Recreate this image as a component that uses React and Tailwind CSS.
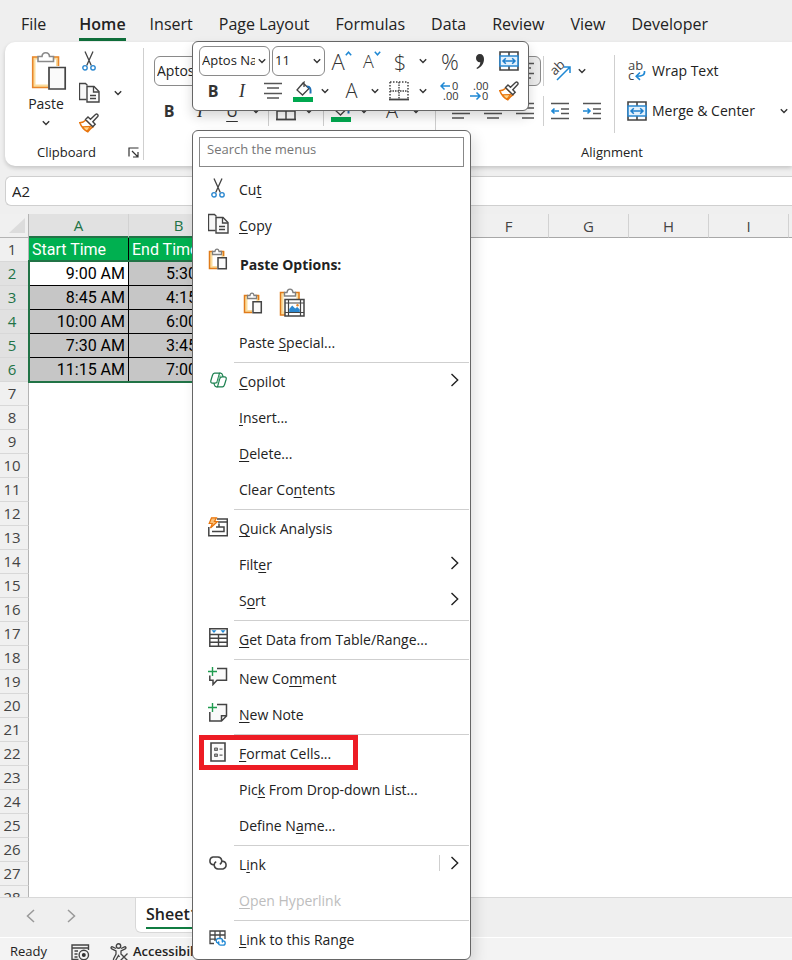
const tabs = ["File", "Home", "Insert", "Page Layout", "Formulas", "Data", "Review", "View", "Developer"];

const columns = ["A", "B", "C", "D", "E", "F", "G", "H", "I", "J"];

const times = [
    ["9:00 AM", "5:30 PM"],
    ["8:45 AM", "4:15 PM"],
    ["10:00 AM", "6:00 PM"],
    ["7:30 AM", "3:45 PM"],
    ["11:15 AM", "7:00 PM"],
];

const emptyRows = Array.from({ length: 22 }, (_, i) => i + 7);

/* ---------- icons ---------- */

function Icon({ w, h, children, className = "" }) {
    return (
        <svg width={w} height={h} viewBox={`0 0 ${w} ${h}`} fill="none" stroke="#444" className={`shrink-0 ${className}`} aria-hidden="true">
            {children}
        </svg>
    );
}

const Chevron = () => (
    <Icon w={8} h={6}>
        <path d="M.8 1.2 4 4.4 7.2 1.2" stroke="#333" strokeWidth="1.4" />
    </Icon>
);

const SubmenuArrow = () => (
    <Icon w={9} h={14}>
        <path d="M1.5 1 7.7 7l-6.2 6" stroke="#222" strokeWidth="1.4" />
    </Icon>
);

const ScissorsIcon = () => (
    <Icon w={14} h={20}>
        <path d="M3 .5 9.3 14.6M11 .5 4.7 14.6" strokeWidth="1.3" />
        <circle cx="3" cy="16.8" r="2.2" stroke="#2b88d0" strokeWidth="1.4" />
        <circle cx="11" cy="16.8" r="2.2" stroke="#2b88d0" strokeWidth="1.4" />
    </Icon>
);

const CopyIcon = () => (
    <Icon w={21} h={21}>
        <path d="M7.5 17.5h-7V1.5h6l2 2" fill="#f7f7f7" strokeWidth="1.3" />
        <path d="M8 4.5h7l5 5v10.5H8z" fill="#fafafa" strokeWidth="1.4" />
        <path d="M14.5 4.5v5.5H20M11 13.5h6M11 16.5h6" strokeWidth="1.3" />
    </Icon>
);

const PainterIcon = () => (
    <Icon w={20} h={20}>
        <path d="M7 7C5 9 3 9.600 .8 9.800c1.500 4 4 7 8 9 1.500-2 3-4 5.200-5z" fill="#fff" stroke="#e8750d" strokeWidth="1.500" />
        <path d="M3.500 13.800l8-.3-3.500 4.800c-2-1.200-3.500-2.700-4.500-4.500z" fill="#ffd58a" stroke="#e8750d" strokeWidth="1.200" />
        <path d="M6.500 6.500 9 4l2.500 2.300L16.500 1.500c1.500-1.200 3.300.5 2.200 2L13.800 8.700l2.400 2.500-2.400 2.500z" fill="#fff" strokeWidth="1.400" />
    </Icon>
);

const PasteLargeIcon = () => (
    <Icon w={36} h={40} className="ml-[5px]">
        <path d="M8 7H3v28h14M22 7h4.500v8" stroke="#fbdc9c" strokeWidth="3" />
        <path d="M9 6H1.700v30.500H17M21 6h6.500v9" stroke="#e8862b" strokeWidth="1.600" />
        <path d="M7 10.500V5.500h4c.3-5 7.200-5 7.500 0h4v5z" fill="#fff" stroke="#8a8a8a" strokeWidth="1.600" />
        <path d="M18 16.500h16.200v21.500H18z" fill="#fafafa" strokeWidth="1.700" />
    </Icon>
);

const PasteSmallIcon = () => (
    <Icon w={20} h={22}>
        <path d="M4 4.500H3v15h6M13 4.500h2v5" stroke="#fbdc9c" strokeWidth="3" />
        <path d="M5 3.500H1.500v17H9M12 3.500h3.500V8" stroke="#e07b1a" strokeWidth="1.500" />
        <path d="M4.500 6.500v-3H7c.3-3.300 3.700-3.300 4 0h2.500v3z" fill="#fff" stroke="#808080" strokeWidth="1.300" />
        <path d="M10 9.700h8.300v11H10z" fill="#fafafa" strokeWidth="1.500" />
    </Icon>
);

const PastePictureIcon = () => (
    <Icon w={26} h={30}>
        <path d="M5 6H3v19h3M17 6h2v6" stroke="#fbdc9c" strokeWidth="3" />
        <path d="M6 4.500H1.500v22.500H6M16 4.500h4V11" stroke="#e07b1a" strokeWidth="1.500" />
        <path d="M5.500 8V4.500H8c.4-4.500 5.600-4.500 6 0h2.500V8z" fill="#fff" stroke="#808080" strokeWidth="1.400" />
        <path d="M6 11.500h19v16.500H6z" fill="#fff" strokeWidth="1.500" />
        <path d="M9.500 11.500V28M21.500 11.500V28M6 15h19M6 24.500h19" strokeWidth="1.200" />
        <path d="M10.200 24v-3l3-3.500 3 3 2-1.500 2.600 2.500V24z" fill="#2b88d0" stroke="none" />
        <circle cx="18.500" cy="17.300" r="1.200" fill="#e8862b" stroke="none" />
    </Icon>
);

const MergeIcon = () => (
    <Icon w={20} h={20}>
        <path d="M1 1h18v18H1zM10 1v18" strokeWidth="1.600" />
        <path d="M1 5h18v10H1z" fill="#e3f1fc" stroke="#2b88d0" strokeWidth="1.600" />
        <path d="M4 10h12M6.800 7.200 4 10l2.800 2.800M13.200 7.200 16 10l-2.800 2.800" stroke="#1f7fcc" strokeWidth="1.500" />
    </Icon>
);

const AlignIcon = ({ short = "M3 6h12M3 16h12" }) => (
    <Icon w={18} h={18}>
        <path d={`M0 1.500h18M0 11.500h18${short}`} stroke="#555" strokeWidth="1.400" />
    </Icon>
);

const FillIcon = () => (
    <Icon w={20} h={21}>
        <path d="M10 2 4 9l5.500 5 6.500-6.500zM7.500 5 11 1.200V6" fill="#fff" strokeWidth="1.300" />
        <path d="M14 5.500c3 0 4 2 3.500 7" stroke="#1f6fb5" strokeWidth="2" />
        <path d="M0 16h20v5H0z" fill="#00a84f" stroke="none" />
    </Icon>
);

const BorderIcon = ({ dashed }) => (
    <Icon w={20} h={20}>
        <path d="M1 1h18v17M1 1v17" strokeWidth="1.500" strokeDasharray={dashed ? "1.500 1.500" : undefined} />
        <path d="M10 1v18M1 10h18" strokeWidth="1.400" strokeDasharray={dashed ? "1.500 1" : undefined} />
        <path d="M0 18.500h20" strokeWidth="1.800" />
    </Icon>
);

const IndentIcon = ({ right }) => (
    <Icon w={18} h={18}>
        <path d="M0 1.500h18M10 7h8M10 11.500h8M0 16.500h18" stroke="#555" strokeWidth="1.400" />
        <path d={right ? "M0 9h7M4.500 6.500 7 9l-2.500 2.500" : "M1 9h7M3.500 6.500 1 9l2.500 2.500"} stroke="#1f88d4" strokeWidth="1.600" />
    </Icon>
);

const OrientationIcon = () => (
    <Icon w={22} h={20}>
        <text x="0" y="0" transform="translate(6 15) rotate(-45)" fontSize="13" fontFamily="Open Sans" fill="#444" stroke="none">ab</text>
        <path d="M8 19 20.500 6.500M15 6H21V12" stroke="#1f88d4" strokeWidth="1.500" />
    </Icon>
);

const WrapIcon = () => (
    <Icon w={20} h={20}>
        <text x="1" y="9" fontSize="13" fontFamily="Open Sans" fill="#444" stroke="none">ab</text>
        <text x="1" y="19" fontSize="13" fontFamily="Open Sans" fill="#444" stroke="none">c</text>
        <path d="M17.500 10c.5 4-2 5.200-8 5.200M13 11.500l-3.800 3.700 3.800 3.700" stroke="#1f88d4" strokeWidth="1.600" />
    </Icon>
);

const LauncherIcon = () => (
    <Icon w={11} h={11}>
        <path d="M1 9.500V1h9.500M4 4l5.500 5.500M10 5v5H5" stroke="#333" strokeWidth="1.200" />
    </Icon>
);

const DecimalIcon = ({ increase }) => (
    <Icon w={20} h={20}>
        <text x={increase ? 12 : 3} y="9" fontSize="11" fontFamily="Open Sans" fill="#333" stroke="none">{increase ? "0" : ".00"}</text>
        <text x={increase ? 3 : 12} y="19" fontSize="11" fontFamily="Open Sans" fill="#333" stroke="none">{increase ? ".00" : "0"}</text>
        {increase
            ? <path d="M1 5h9M4.500 1.500 1 5l3.500 3.500" stroke="#1f88d4" strokeWidth="1.500" />
            : <path d="M0 15h10M6.500 11.500 10 15l-3.500 3.500" stroke="#1f88d4" strokeWidth="1.500" />}
    </Icon>
);

const FontSizeIcon = ({ grow }) => (
    <span className={`flex leading-5 font-light ${grow ? "text-[22px]" : "text-lg"}`}>
        A
        <Icon w={7} h={5}>
            <path d={grow ? "M.8 4.200 3.500 1.200l2.700 3" : "M.8 .8l2.700 3 2.700-3"} stroke="#1f88d4" strokeWidth="1.500" />
        </Icon>
    </span>
);

const CopilotIcon = () => (
    <Icon w={17} h={16}>
        <path d="M4.500 1.200h5L7.300 9.200c-.5 1.600-1 2-2.300 2H2.500C1 11.200.5 10 .9 8.500l1.500-5C2.900 1.800 3.300 1.200 4.500 1.200z" stroke="#1a7f4e" strokeWidth="1.200" />
        <path d="M12.500 14.800h-5l2.200-8c.5-1.600 1-2 2.300-2h2.500c1.500 0 2 1.200 1.600 2.700l-1.500 5c-.5 1.700-.9 2.300-2.100 2.300z" stroke="#1a7f4e" strokeWidth="1.200" />
        <path d="M9.500 1.200h1.200c1.300 0 1.600.8 2 2.200l.4 1.400M7.500 14.800H6.300c-1.300 0-1.600-.8-2-2.200l-.4-1.400" stroke="#1a7f4e" strokeWidth="1.200" />
        <path d="M9 3.500h2.500l.4 1.300c-1.500 0-2 .7-2.600 2L8 11.200H5.300c1.300 0 1.800-.8 2.200-2.300z" fill="#7cc09b" stroke="none" />
    </Icon>
);

const QuickAnalysisIcon = () => (
    <Icon w={20} h={20}>
        <path d="M9 2h10.300v16.700H.800V10M10 5h9" strokeWidth="1.500" />
        <path d="M4 14.500h12V10H8M11 10V6.500" strokeWidth="1.500" />
        <path d="M3.500 .8h5L6.500 4.500h3L2.500 11l1.800-4.500H1.200z" fill="#fbc078" stroke="#e8750d" strokeWidth="1.200" />
    </Icon>
);

const TableIcon = () => (
    <Icon w={19} h={19}>
        <path d="M.800 .800h17.400v17.400H.800z" fill="#fff" strokeWidth="1.500" />
        <path d="M1 6.500h17M1 10.200h17M1 14.200h17M9.500 6.500V18" strokeWidth="1.400" />
        <path d="M2.500 2.200h5L5 5zM11.500 2.200h5L14 5z" fill="#1f88d4" stroke="none" />
    </Icon>
);

const CommentIcon = () => (
    <Icon w={20} h={19}>
        <path d="M9 1.500h9.500v11.700H9L5 17.500v-4.300H1.800V8.500" fill="#fafafa" strokeWidth="1.500" />
        <path d="M4.500 0v9M0 4.500h9" stroke="#1f9c4f" strokeWidth="1.400" />
    </Icon>
);

const NoteIcon = () => (
    <Icon w={20} h={19}>
        <path d="M9 1.500h9.500v11.500l-5 5H1.800V9M18.500 12.800h-5V18" fill="#fafafa" strokeWidth="1.500" />
        <path d="M4.500 0v9M0 4.500h9" stroke="#1f9c4f" strokeWidth="1.400" />
    </Icon>
);

const FormatCellsIcon = () => (
    <Icon w={16} h={20}>
        <path d="M1 1h14v18H1z" fill="#fafafa" strokeWidth="1.600" />
        <path d="M4.500 6h3v2.500h-3zM4.500 12h3v2.500h-3z" fill="#999" stroke="#666" />
        <path d="M9.500 7.200h3M9.500 13.200h3" stroke="#666" strokeWidth="1.300" />
    </Icon>
);

const LinkIcon = () => (
    <Icon w={20} h={14}>
        <path d="M7 8.800H5A4 4 0 0 1 5 1h5a3.900 3.900 0 0 1 1.800 7.300" strokeWidth="1.500" />
        <path d="M13 5.200H15a4 4 0 0 1 0 7.800h-5a3.900 3.900 0 0 1-1.800-7.300" strokeWidth="1.500" />
    </Icon>
);

const LinkRangeIcon = () => (
    <Icon w={18} h={16}>
        <path d="M5 13.500H1V1h15v8M1 5h15M1 9.200h6M6 1v10M11 1v7" strokeWidth="1.300" />
        <path d="M10.500 13H9a2.300 2.300 0 0 1 0-4.500h2.500a2.300 2.300 0 0 1 1.500 4" stroke="#1f88d4" strokeWidth="1.300" />
        <path d="M12.500 10.800H14a2.200 2.200 0 0 1 0 4.400h-2.500a2.200 2.200 0 0 1-1.500-3.800" stroke="#1f88d4" strokeWidth="1.300" />
    </Icon>
);

const MacroIcon = () => (
    <Icon w={19} h={17}>
        <path d="M7.500 15.500H1V1h16.500v5M1 4h16.500M3.500 7H7M3.500 10h3M3.500 13h3" strokeWidth="1.400" />
        <circle cx="12.800" cy="11" r="4.700" strokeWidth="1.400" />
        <circle cx="12.800" cy="11" r="2" fill="#333" stroke="none" />
    </Icon>
);

const AccessibilityIcon = () => (
    <Icon w={20} h={19}>
        <circle cx="8.500" cy="3" r="2.200" strokeWidth="1.400" />
        <path d="M6 5.500 2.500 3.800C1 3.500.5 5.200 1.800 5.800L6 8v3l-2.500 5c-.3 1.600 1.500 2.300 2.300 1L8.500 12.500l1 1.500M11 5.500l3.500-1.700c1.500-.3 2 1.400.7 2L11 8v2.500" strokeWidth="1.300" />
        <path d="m10.500 10.500 7 7M17.500 10.500l-7 7" strokeWidth="1.400" />
    </Icon>
);

/* ---------- ribbon ---------- */

function Tool({ label, className = "", children }) {
    return (
        <button type="button" aria-label={label} className={`flex h-[30px] shrink-0 items-center justify-center text-[#333] ${className}`}>
            {children}
        </button>
    );
}

function FontSelect({ label, value, className }) {
    return (
        <span className={`relative flex h-[30px] items-center rounded-md border border-[#8a8a8a] bg-white ${className}`}>
            <select aria-label={label} className="h-full w-full appearance-none pr-[14px] pl-[2px] text-[#222]">
                <option>{value}</option>
            </select>
            <span className="pointer-events-none absolute right-[3px]">
                <Chevron />
            </span>
        </span>
    );
}

const Bold = () => <span className="text-base font-bold">B</span>;
const Italic = () => <span className="font-['Liberation_Serif',serif] text-lg italic">I</span>;

function Ribbon() {
    return (
        <section className="ml-[5px] flex shrink-0 rounded-l-[10px] bg-white py-[6px] text-sm shadow-[0_2px_4px_rgba(0,0,0,0.18)]">
            {/* Clipboard */}
            <div className="flex w-[139px] shrink-0 flex-col border-r border-[#cfcfcf]">
                <div className="flex h-[82px] pt-[3px]">
                    <button type="button" className="ml-[22px] flex h-[82px] w-[38px] flex-col items-center">
                        <PasteLargeIcon />
                        <span className="mt-[3px] leading-5">Paste</span>
                        <span className="mt-[6px]">
                            <Chevron />
                        </span>
                    </button>
                    <div className="ml-[8px] flex w-8 flex-col gap-px">
                        <Tool label="Cut" className="mt-[-5px]"><ScissorsIcon /></Tool>
                        <Tool label="Copy"><CopyIcon /></Tool>
                        <Tool label="Format Painter"><PainterIcon /></Tool>
                    </div>
                    <Tool label="Copy options" className="mt-[27px] ml-[3px] w-5"><Chevron /></Tool>
                </div>
                <div className="mt-[14px] flex items-center pl-8 text-[13px] leading-4">
                    Clipboard
                    <button type="button" aria-label="Clipboard settings" className="mr-1 ml-auto">
                        <LauncherIcon />
                    </button>
                </div>
            </div>

            {/* Font */}
            <div className="flex w-[292px] shrink-0 flex-col gap-[10px] border-r border-[#cfcfcf] pt-2 pl-[10px]">
                <FontSelect label="Font" value="Aptos Narrow" className="w-[140px] text-sm" />
                <div className="flex">
                    <Tool label="Bold" className="w-[30px]"><Bold /></Tool>
                    <Tool label="Italic" className="w-8"><Italic /></Tool>
                    <Tool label="Underline" className="w-8"><span className="text-base underline underline-offset-4">U</span></Tool>
                    <Tool label="Underline options" className="w-4"><Chevron /></Tool>
                    <span className="mx-1 h-[30px] w-px bg-[#cfcfcf]" />
                    <Tool label="Borders" className="w-[26px]"><BorderIcon /></Tool>
                    <Tool label="Border options" className="w-5"><Chevron /></Tool>
                    <span className="mx-1 h-[30px] w-px bg-[#cfcfcf]" />
                    <Tool label="Fill Color" className="w-[26px]"><FillIcon /></Tool>
                    <Tool label="Fill options" className="w-5"><Chevron /></Tool>
                    <Tool label="Font Color" className="w-9"><span className="text-xl font-light">A</span></Tool>
                    <Tool label="Font color options" className="w-3"><Chevron /></Tool>
                </div>
            </div>

            {/* Alignment */}
            <div className="flex flex-1 flex-col">
                <div className="flex">
                    <div className="flex flex-col gap-[10px] pt-2 pr-1 pl-[9px]">
                        <div className="flex">
                            <Tool label="Top Align" className="w-8"><AlignIcon /></Tool>
                            <Tool label="Middle Align" className="w-8"><AlignIcon /></Tool>
                            <Tool label="Bottom Align" className="w-8 rounded-md border border-[#8a8a8a] bg-[#ebebeb]"><AlignIcon /></Tool>
                            <span className="mx-[2px] h-[30px] w-px bg-[#cfcfcf]" />
                            <Tool label="Orientation" className="w-7"><OrientationIcon /></Tool>
                            <Tool label="Orientation options" className="w-4"><Chevron /></Tool>
                        </div>
                        <div className="flex">
                            <Tool label="Align Left" className="w-8"><AlignIcon short="M0 6h12M0 16h12" /></Tool>
                            <Tool label="Center" className="w-8"><AlignIcon /></Tool>
                            <Tool label="Align Right" className="w-8"><AlignIcon short="M6 6h12M6 16h12" /></Tool>
                            <span className="mx-[2px] h-[30px] w-px bg-[#cfcfcf]" />
                            <Tool label="Decrease Indent" className="w-7"><IndentIcon /></Tool>
                            <Tool label="Increase Indent" className="w-9"><IndentIcon right /></Tool>
                        </div>
                    </div>
                    <div className="mt-[7px] flex flex-1 flex-col gap-[10px] border-l border-[#cfcfcf] pt-px pb-[7px] pl-3">
                        <button type="button" className="flex h-[30px] items-center gap-[5px]">
                            <WrapIcon />
                            Wrap Text
                        </button>
                        <div className="flex">
                            <button type="button" className="flex h-[30px] items-center gap-[5px] whitespace-nowrap">
                                <MergeIcon />
                                Merge &amp; Center
                            </button>
                            <Tool label="Merge options" className="mr-1 ml-auto w-2"><Chevron /></Tool>
                        </div>
                    </div>
                </div>
                <div className="mt-auto pr-1 text-center text-[13px] leading-4">Alignment</div>
            </div>
        </section>
    );
}

/* ---------- sheet ---------- */

function RowHeader({ n, selected }) {
    return (
        <th scope="row" className={`h-6 border-r border-b border-r-[#b4b4b4] border-b-[#d8d8d8] p-0 pr-1 text-center font-['Open_Sans','Noto_Sans',sans-serif] text-[15px] leading-[23px] font-normal ${selected ? "bg-[#e1e1e1] text-[#217346]" : "bg-[#f0f0f0] text-[#444]"}`}>
            {n}
        </th>
    );
}

function Sheet() {
    return (
        <div className="relative flex-1 overflow-hidden bg-white">
            <table className="w-[868px] table-fixed border-separate border-spacing-0">
                <colgroup>
                    <col className="w-[29px]" />
                    <col className="w-[100px]" />
                    <col className="w-[100px]" />
                    {columns.slice(2).map((c) => <col key={c} className="w-20" />)}
                </colgroup>
                <thead>
                    <tr>
                        <td className="h-6 border-r border-b border-[#b4b4b4] bg-[#f0f0f0] p-0">
                            <Icon w={28} h={23} className="block">
                                <path d="M25 4v15H9z" fill="#dcdcdc" stroke="none" />
                            </Icon>
                        </td>
                        {columns.map((c, i) => (
                            <th
                                key={c}
                                scope="col"
                                className={`h-6 border-r border-r-[#d2d2d2] p-0 text-[15px] leading-[22px] font-normal ${
                                    i < 2 ? "border-b-2 border-b-[#217346] bg-[#e1e1e1] text-[#217346]" : "border-b border-b-[#a8a8a8] bg-[#f0f0f0] text-[#444]"
                                }`}
                            >
                                {c}
                            </th>
                        ))}
                    </tr>
                </thead>
                <tbody className="font-[Roboto,sans-serif] text-base">
                    <tr>
                        <RowHeader n={1} />
                        <td className="h-6 border-r border-black bg-[#00b050] p-0 pl-[3px] leading-6 text-white">Start Time</td>
                        <td className="h-6 border-r border-black bg-[#00b050] p-0 pl-[3px] leading-6 text-white">End Time</td>
                    </tr>
                    {times.map((row, r) => (
                        <tr key={r}>
                            <RowHeader n={r + 2} selected />
                            {row.map((time, c) => (
                                <td
                                    key={c}
                                    className={`h-6 border-r border-b border-black p-0 pr-[3px] text-right leading-[23px] text-black ${
                                        r === 0 && c === 0 ? "bg-white" : "bg-[#c6c6c6]"
                                    }`}
                                >
                                    {time}
                                </td>
                            ))}
                        </tr>
                    ))}
                    {emptyRows.map((n) => (
                        <tr key={n}>
                            <RowHeader n={n} />
                        </tr>
                    ))}
                </tbody>
            </table>
            {/* selection outline */}
            <div className="pointer-events-none absolute top-[46px] left-[28px] h-[123px] w-[202px] border-2 border-[#217346]" />
        </div>
    );
}

/* ---------- floating toolbar ---------- */

function MiniToolbar() {
    return (
        <div role="toolbar" aria-label="Formatting" className="absolute top-[41px] left-[192px] w-[337px] rounded-md border border-[#666] bg-white pt-[4px] pb-[4px] pl-[6px] shadow-[0_6px_12px_rgba(0,0,0,0.16)]">
            <div className="flex">
                <FontSelect label="Font name" value="Aptos Narrow" className="mr-[2px] w-[71px] text-[13px]" />
                <FontSelect label="Font size" value="11" className="w-[53px] text-[13px]" />
                <Tool label="Increase Font Size" className="w-[33px]"><FontSizeIcon grow /></Tool>
                <Tool label="Decrease Font Size" className="w-7"><FontSizeIcon /></Tool>
                <Tool label="Currency" className="w-7"><span className="text-[22px] font-light">$</span></Tool>
                <Tool label="Currency options" className="w-[18px]"><Chevron /></Tool>
                <Tool label="Percent" className="w-9"><span className="text-[22px] font-light">%</span></Tool>
                <Tool label="Comma Style" className="w-6">
                    <Icon w={10} h={17}>
                        <path d="M4.800 1C7.500 1 9 3 9 6c0 4.500-2.500 8.200-7 10l-.5-1C4 13.500 5.300 11.500 5.300 9.200 2.800 9.500 1 7.500 1 5c0-2.300 1.500-4 3.800-4z" fill="#333" stroke="none" />
                    </Icon>
                </Tool>
                <Tool label="Merge & Center" className="w-[34px]"><MergeIcon /></Tool>
            </div>
            <div className="flex">
                <Tool label="Bold" className="w-7"><Bold /></Tool>
                <Tool label="Italic" className="w-[30px]"><Italic /></Tool>
                <Tool label="Center" className="w-8"><AlignIcon /></Tool>
                <Tool label="Fill Color" className="w-7"><FillIcon /></Tool>
                <Tool label="Fill options" className="w-4"><Chevron /></Tool>
                <Tool label="Font Color" className="w-[37px]"><span className="text-xl font-light">A</span></Tool>
                <Tool label="Font color options" className="w-[10px]"><Chevron /></Tool>
                <Tool label="Borders" className="w-[38px]"><BorderIcon dashed /></Tool>
                <Tool label="Border options" className="w-[10px]"><Chevron /></Tool>
                <Tool label="Increase Decimal" className="ml-1 w-9"><DecimalIcon increase /></Tool>
                <Tool label="Decrease Decimal" className="w-6"><DecimalIcon /></Tool>
                <Tool label="Format Painter" className="w-[34px]"><PainterIcon /></Tool>
            </div>
        </div>
    );
}

/* ---------- context menu ---------- */

// "&" goes before the access key of a label
const menuGroups = [
    [
        { label: "&Copilot", icon: <CopilotIcon />, submenu: true },
        { label: "&Insert..." },
        { label: "&Delete..." },
        { label: "Clear Co&ntents" },
    ],
    [
        { label: "&Quick Analysis", icon: <QuickAnalysisIcon /> },
        { label: "Filt&er", submenu: true },
        { label: "S&ort", submenu: true },
    ],
    [{ label: "&Get Data from Table/Range...", icon: <TableIcon /> }],
    [
        { label: "New Co&mment", icon: <CommentIcon /> },
        { label: "&New Note", icon: <NoteIcon /> },
    ],
    [
        { label: "&Format Cells...", icon: <FormatCellsIcon />, marked: true },
        { label: "Pic&k From Drop-down List..." },
        { label: "Define N&ame..." },
    ],
    [
        { label: "L&ink", icon: <LinkIcon />, submenu: true, split: true },
        { label: "&Open Hyperlink", disabled: true },
    ],
    [{ label: "&Link to this Range", icon: <LinkRangeIcon /> }],
];

function MenuItem({ label, icon, submenu, split, disabled, marked }) {
    const [before, after] = label.split("&");
    return (
        <button
            type="button"
            role="menuitem"
            disabled={disabled}
            className={`relative flex h-9 w-full items-center pr-[11px] pl-[14px] text-sm ${disabled ? "text-[#bdbdbd]" : "text-[#222]"}`}
        >
            <span className="mr-[10px] flex w-[22px] justify-center pb-[3px]">{icon}</span>
            <span className="pt-[2px] whitespace-pre">
                {before}
                <span className="underline underline-offset-2">{after[0]}</span>
                {after.slice(1)}
            </span>
            {submenu && (
                <span className={`mb-[2px] ml-auto flex h-4 items-center ${split ? "border-l border-[#cfcfcf] pl-[10px]" : ""}`}>
                    <SubmenuArrow />
                </span>
            )}
            {marked && <span className="absolute top-0 left-[6px] h-[35px] w-[159px] border-[5px] border-[#ed1c24]" />}
        </button>
    );
}

const Separator = () => <div role="separator" className="mt-[2px] mr-px ml-[41px] h-px bg-[#cfcfcf]" />;

function ContextMenu() {
    return (
        <div role="menu" className="absolute top-[130px] left-[192px] w-[279px] rounded-md border border-[#666] bg-white pt-[6px] pb-[2px] shadow-[4px_6px_14px_rgba(0,0,0,0.12)]">
            <div className="mb-1 px-[6px]">
                <input type="text" aria-label="Search the menus" placeholder="Search the menus" className="block h-[30px] w-full border border-[#888] pb-[6px] pl-[7px] text-[13px] placeholder:text-[#767676]" />
            </div>
            <MenuItem label="Cu&t" icon={<ScissorsIcon />} />
            <MenuItem label="&Copy" icon={<CopyIcon />} />
            <div className="mt-[3px] flex h-9 items-center pl-[14px] text-sm font-bold text-[#222]">
                <span className="mr-[11px] flex h-8 w-[22px] justify-center">
                    <PasteSmallIcon />
                </span>
                <span className="pt-[2px]">Paste Options:</span>
            </div>
            <div className="flex h-[42px] items-center gap-4 pl-[50px]">
                <button type="button" aria-label="Paste"><PasteSmallIcon /></button>
                <button type="button" aria-label="Paste as picture"><PastePictureIcon /></button>
            </div>
            <MenuItem label="Paste &Special..." />
            {menuGroups.map((group, i) => (
                <div key={i}>
                    <Separator />
                    {group.map((item) => <MenuItem key={item.label} {...item} />)}
                </div>
            ))}
        </div>
    );
}

function App() {
    return (
        <div className="relative flex h-screen flex-col overflow-hidden bg-[#efefef] font-['Open_Sans','Noto_Sans',sans-serif] text-[#222]">
            <nav className="flex h-[42px] shrink-0 items-center gap-[26px] pt-[6px] pl-[21px] text-base whitespace-nowrap">
                {tabs.map((tab) => (
                    <a key={tab} href="#" className={`flex h-[33px] items-center ${tab === "Home" ? "mr-[-2px] ml-[7px] border-b-[3px] border-[#0f6e3a] pt-[3px] font-semibold" : ""}`}>
                        {tab}
                    </a>
                ))}
            </nav>

            <Ribbon />

            <div className="mt-[10px] mb-2 ml-[5px] flex h-[30px] shrink-0 rounded-l-md border border-r-0 border-[#cfcfcf] bg-white">
                <input type="text" aria-label="Name Box" defaultValue="A2" className="w-[180px] pl-[6px] text-[15px]" />
                <input type="text" aria-label="Formula bar" className="flex-1" />
            </div>

            <Sheet />

            <div className="flex h-10 shrink-0 border-t border-[#d8d8d8]">
                <div className="flex w-[135px] items-center gap-8 pb-1 pl-[26px]">
                    <button type="button" aria-label="Previous sheet">
                        <Icon w={9} h={14}><path d="M8 1 1.500 7 8 13" stroke="#999" strokeWidth="1.500" /></Icon>
                    </button>
                    <button type="button" aria-label="Next sheet">
                        <Icon w={9} h={14}><path d="M1 1l6.500 6L1 13" stroke="#999" strokeWidth="1.500" /></Icon>
                    </button>
                </div>
                <div className="h-[35px] rounded-b-md border border-t-0 border-[#d8d8d8] bg-white px-[10px]">
                    <button type="button" className="h-[31px] border-b-2 border-[#107c41] pt-[2px] text-base font-semibold">Sheet1</button>
                </div>
            </div>

            <footer className="flex h-[23px] shrink-0 items-center border-t border-white bg-[#f3f3f3] pt-[6px] pl-[10px] text-[13px] whitespace-nowrap">
                Ready
                <span className="ml-6"><MacroIcon /></span>
                <span className="ml-5"><AccessibilityIcon /></span>
                <span className="ml-[3px] font-semibold">Accessibility: Good to go</span>
            </footer>

            <MiniToolbar />
            <ContextMenu />
        </div>
    );
}

export default App;
